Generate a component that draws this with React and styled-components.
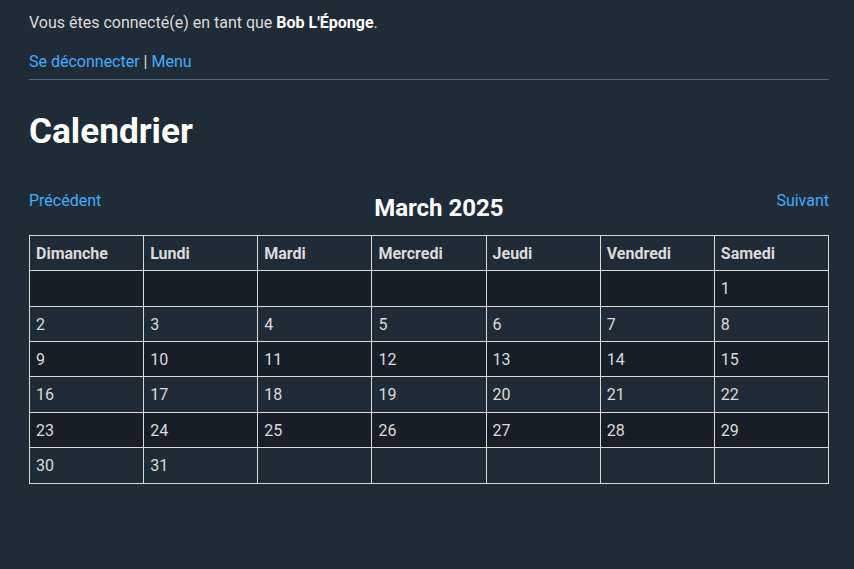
import React from "react";
import styled, { createGlobalStyle } from "styled-components";

const GlobalStyle = createGlobalStyle`
  html, body {
    margin: 0;
    padding: 0;
    background-color: #202b38;
  }
  body {
    font-family: Roboto, "Noto Sans", "Liberation Sans", sans-serif;
    font-size: 16px;
    line-height: 1.4;
    color: #dbdbdb;
  }
`;

const Page = styled.div`
  width: 800px;
  margin-left: 29px;
  padding-top: 12px;
`;

const Text = styled.p`
  margin: 0 0 17px;
`;

const Bright = styled.strong`
  color: #fff;
  font-weight: 700;
`;

const Nav = styled.div``;

const Link = styled.a`
  color: #41adff;
  text-decoration: none;
`;

const Rule = styled.hr`
  margin: 5px 0 0;
  border: none;
  border-top: 1px solid #526980;
`;

const Title = styled.h1`
  margin: 30px 0 0;
  font-size: 35.2px;
  line-height: 1.2;
  font-weight: 700;
  color: #fff;
`;

const MonthBar = styled.div`
  display: flex;
  justify-content: space-between;
  align-items: flex-start;
  margin-top: 38px;
`;

const Month = styled.h2`
  margin: 4px 0 0;
  font-size: 24px;
  line-height: 1.2;
  font-weight: 700;
  color: #fff;
`;

const Table = styled.table`
  width: 100%;
  margin-top: 12px;
  border-collapse: collapse;
  table-layout: fixed;
`;

const Row = styled.tr`
  background-color: ${({ $alt }) => ($alt ? "#161f27" : "transparent")};
`;

const Head = styled.th`
  padding: 7px 6px 5px;
  border: 1px solid #dbdbdb;
  text-align: left;
  font-weight: 700;
`;

const Cell = styled.td`
  padding: 7px 6px 5px;
  border: 1px solid #dbdbdb;
  text-align: left;
`;

const days = ["Dimanche", "Lundi", "Mardi", "Mercredi", "Jeudi", "Vendredi", "Samedi"];

// March 2025 starts on a Saturday
const buildWeeks = (offset, total) => {
  const cells = [];
  for (let i = 0; i < offset; i++) cells.push(null);
  for (let d = 1; d <= total; d++) cells.push(d);
  while (cells.length % 7) cells.push(null);
  const weeks = [];
  for (let i = 0; i < cells.length; i += 7) weeks.push(cells.slice(i, i + 7));
  return weeks;
};

const App = () => {
  const weeks = buildWeeks(6, 31);
  return (
    <>
      <GlobalStyle />
      <Page>
        <Text>
          Vous êtes connecté(e) en tant que <Bright>Bob L'Éponge</Bright>.
        </Text>
        <Nav>
          <Link href="#">Se déconnecter</Link> | <Link href="#">Menu</Link>
        </Nav>
        <Rule />
        <Title>Calendrier</Title>
        <MonthBar>
          <Link href="#">Précédent</Link>
          <Month>March 2025</Month>
          <Link href="#">Suivant</Link>
        </MonthBar>
        <Table>
          <tbody>
            <Row>
              {days.map((day) => (
                <Head key={day}>{day}</Head>
              ))}
            </Row>
            {weeks.map((week, idx) => (
              <Row key={idx} $alt={idx % 2 === 0}>
                {week.map((d, j) => (
                  <Cell key={j}>{d}</Cell>
                ))}
              </Row>
            ))}
          </tbody>
        </Table>
      </Page>
    </>
  );
};

export default App;
